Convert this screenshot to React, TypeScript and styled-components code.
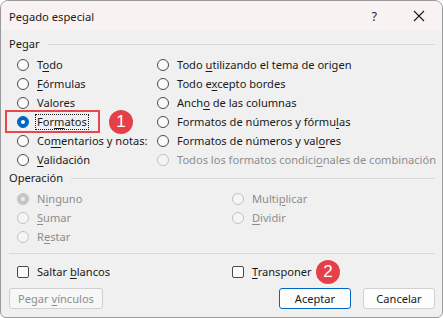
import React from 'react';
import styled, { createGlobalStyle } from 'styled-components';

const GlobalStyle = createGlobalStyle`
    html, body {
        margin: 0;
        padding: 0;
        background: #ffffff;
    }
    body {
        font-family: 'Noto Sans', 'Open Sans', sans-serif;
        font-size: 11.1px;
        color: #1a1a1a;
    }
`;

type Opt = { label: string; u: number; checked?: boolean; disabled?: boolean; focus?: boolean; badge?: string };

const pasteLeft: Opt[] = [
    { label: 'Todo', u: 1 },
    { label: 'Fórmulas', u: 0 },
    { label: 'Valores', u: -1 },
    { label: 'Formatos', u: 3, checked: true, focus: true, badge: '1' },
    { label: 'Comentarios y notas:', u: 2 },
    { label: 'Validación', u: 0 },
];

const pasteRight: Opt[] = [
    { label: 'Todo utilizando el tema de origen', u: 5 },
    { label: 'Todo excepto bordes', u: 6 },
    { label: 'Ancho de las columnas', u: 4 },
    { label: 'Formatos de números y fórmulas', u: 27 },
    { label: 'Formatos de números y valores', u: 25 },
    { label: 'Todos los formatos condicionales de combinación', u: 26, disabled: true },
];

const opLeft: Opt[] = [
    { label: 'Ninguno', u: 1, checked: true, disabled: true },
    { label: 'Sumar', u: 0, disabled: true },
    { label: 'Restar', u: 1, disabled: true },
];

const opRight: Opt[] = [
    { label: 'Multiplicar', u: 5, disabled: true },
    { label: 'Dividir', u: 0, disabled: true },
];

function Mnemonic({ text, u }: { text: string; u: number }) {
    if (u < 0) return <>{text}</>;
    return (
        <>
            {text.slice(0, u)}
            <U>{text[u]}</U>
            {text.slice(u + 1)}
        </>
    );
}

function Radio({ opt }: { opt: Opt }) {
    const row = (
        <OptionRow $disabled={opt.disabled}>
            <RadioDot $checked={opt.checked} $disabled={opt.disabled} />
            <OptionLabel $focus={opt.focus}>
                <Mnemonic text={opt.label} u={opt.u} />
            </OptionLabel>
            {opt.badge && <Badge $left={92}>{opt.badge}</Badge>}
        </OptionRow>
    );
    if (opt.focus) return <Highlight>{row}</Highlight>;
    return row;
}

export default function App() {
    return (
        <>
            <GlobalStyle />
            <Window>
                <TitleBar>
                    <Title>Pegado especial</Title>
                    <TitleButtons>
                        <HelpMark>?</HelpMark>
                        <svg width="12" height="12" viewBox="0 0 12 12">
                            <path d="M1 1 L11 11 M11 1 L1 11" stroke="#1a1a1a" strokeWidth="1.1" />
                        </svg>
                    </TitleButtons>
                </TitleBar>

                <Body>
                    <Legend>Pegar</Legend>
                    <OptionGrid $second={140}>
                        <Column>
                            {pasteLeft.map((o) => (
                                <Radio key={o.label} opt={o} />
                            ))}
                        </Column>
                        <Column>
                            {pasteRight.map((o) => (
                                <Radio key={o.label} opt={o} />
                            ))}
                        </Column>
                    </OptionGrid>

                    <Legend>Operación</Legend>
                    <OptionGrid $second={215}>
                        <Column>
                            {opLeft.map((o) => (
                                <Radio key={o.label} opt={o} />
                            ))}
                        </Column>
                        <Column>
                            {opRight.map((o) => (
                                <Radio key={o.label} opt={o} />
                            ))}
                        </Column>
                    </OptionGrid>

                    <Separator />

                    <CheckGrid>
                        <OptionRow>
                            <CheckBox />
                            <OptionLabel>
                                Saltar <U>b</U>lancos
                            </OptionLabel>
                        </OptionRow>
                        <OptionRow>
                            <CheckBox />
                            <OptionLabel>
                                <U>T</U>ransponer
                            </OptionLabel>
                            <Badge $left={84}>2</Badge>
                        </OptionRow>
                    </CheckGrid>

                    <Footer>
                        <Button $disabled>
                            <span>
                                Pegar <U>v</U>ínculos
                            </span>
                        </Button>
                        <Spacer />
                        <Button $primary>Aceptar</Button>
                        <Button>Cancelar</Button>
                    </Footer>
                </Body>
            </Window>
        </>
    );
}

const Window = styled.div`
    box-sizing: border-box;
    width: 443px;
    height: 318px;
    border: 1px solid #9a9a9a;
    border-radius: 8px 8px 6px 6px;
    background-color: #f0f0f0;
    overflow: hidden;
    display: flex;
    flex-direction: column;
`;

const TitleBar = styled.div`
    height: 29px;
    display: flex;
    align-items: center;
    justify-content: space-between;
    padding: 0 0 0 8px;
    background-color: #f9f2f2;
`;

const Title = styled.div`
    font-size: 11.2px;
    color: #1a1a1a;
    padding-top: 1px;
`;

const TitleButtons = styled.div`
    display: flex;
    align-items: center;
    gap: 36px;
    padding-right: 17px;
    padding-top: 1px;
`;

const HelpMark = styled.span`
    font-size: 12px;
    color: #1a1a1a;
`;

const Body = styled.div`
    flex: 1;
    display: flex;
    flex-direction: column;
    padding: 6px 7px 7px 8px;
`;

const Legend = styled.div`
    display: flex;
    align-items: center;
    gap: 8px;
    height: 16px;
    line-height: 16px;
    color: #1a1a1a;

    &::after {
        content: '';
        flex: 1;
        height: 1px;
        background-color: #d9d9d9;
    }
`;

const OptionGrid = styled.div<{ $second: number }>`
    display: grid;
    grid-template-columns: ${(p) => p.$second}px 1fr;
    padding: 3px 0 1px 8px;
`;

const Column = styled.div`
    display: flex;
    flex-direction: column;
`;

const OptionRow = styled.div<{ $disabled?: boolean }>`
    position: relative;
    display: flex;
    align-items: center;
    height: 19px;
    gap: 8px;
    color: ${(p) => (p.$disabled ? '#8d8d8d' : '#1a1a1a')};
    white-space: nowrap;
`;

const Highlight = styled.div`
    position: relative;

    &::before {
        content: '';
        position: absolute;
        left: -12px;
        top: -2px;
        width: 95px;
        height: 23px;
        border: 2px solid #e5484d;
        box-sizing: border-box;
    }
`;

const RadioDot = styled.span<{ $checked?: boolean; $disabled?: boolean }>`
    box-sizing: border-box;
    width: 12px;
    height: 12px;
    border-radius: 50%;
    flex-shrink: 0;
    border: 1px solid ${(p) => (p.$checked && !p.$disabled ? '#0067c0' : p.$disabled ? '#c2c2c2' : '#4a4a4a')};
    background-color: ${(p) =>
        p.$checked ? (p.$disabled ? '#c6c6c6' : '#0067c0') : p.$disabled ? '#f5f5f5' : '#fbfbfb'};
    display: flex;
    align-items: center;
    justify-content: center;

    &::after {
        content: '';
        display: ${(p) => (p.$checked ? 'block' : 'none')};
        width: 4px;
        height: 4px;
        border-radius: 50%;
        background-color: ${(p) => (p.$disabled ? '#ececec' : '#ffffff')};
    }
`;

const OptionLabel = styled.span<{ $focus?: boolean }>`
    line-height: 14px;
    outline: ${(p) => (p.$focus ? '1px dotted #1a1a1a' : 'none')};
    outline-offset: 0px;
    padding: 0 1px;
    margin-left: -1px;
`;

const U = styled.span`
    text-decoration: underline;
    text-underline-offset: 2px;
`;

const Badge = styled.span<{ $left: number }>`
    position: absolute;
    left: ${(p) => p.$left}px;
    top: 50%;
    transform: translateY(-50%);
    width: 24px;
    height: 24px;
    border-radius: 50%;
    background-color: #e5404a;
    color: #ffffff;
    font-size: 17px;
    line-height: 24px;
    text-align: center;
    font-family: 'Liberation Sans', 'Noto Sans', sans-serif;
`;

const Separator = styled.div`
    height: 1px;
    background-color: #d9d9d9;
    margin: 6px 0 8px 0;
`;

const CheckGrid = styled.div`
    display: grid;
    grid-template-columns: 215px 1fr;
    padding-left: 8px;
`;

const CheckBox = styled.span`
    box-sizing: border-box;
    width: 12px;
    height: 12px;
    border: 1px solid #4a4a4a;
    border-radius: 2px;
    background-color: #fbfbfb;
    flex-shrink: 0;
`;

const Footer = styled.div`
    display: flex;
    align-items: center;
    gap: 12px;
    margin-top: 7px;
`;

const Spacer = styled.div`
    flex: 1;
`;

const Button = styled.div<{ $primary?: boolean; $disabled?: boolean }>`
    box-sizing: border-box;
    height: 21px;
    min-width: 72px;
    padding: 0 8px;
    display: flex;
    align-items: center;
    justify-content: center;
    border-radius: 3px;
    border: 1px solid ${(p) => (p.$primary ? '#0067c0' : '#d0d0d0')};
    background-color: ${(p) => (p.$disabled ? '#f7f7f7' : '#fdfdfd')};
    color: ${(p) => (p.$disabled ? '#8d8d8d' : '#1a1a1a')};
    white-space: nowrap;
`;
